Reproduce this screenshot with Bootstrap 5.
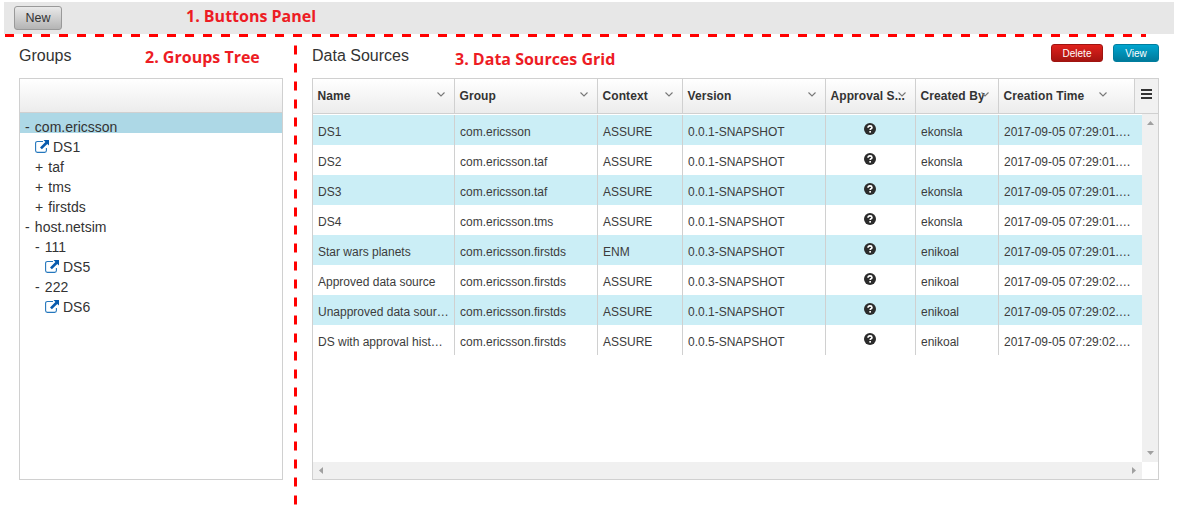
<!DOCTYPE html>
<html lang="en">
<head>
<meta charset="utf-8">
<title>Data Sources</title>
<link href="https://cdn.jsdelivr.net/npm/bootstrap@5.3.0/dist/css/bootstrap.min.css" rel="stylesheet">
<style>
body{font-family:"Liberation Sans",Arial,sans-serif;font-size:14px;color:#333;background:#fff;height:505px;overflow:hidden}
.action-bar{height:32px;margin:2px 12px 0 4px;padding:4px 10px;background:#e7e7e7}
.btn-new{width:48px;height:24px;padding:0;font-size:12.5px;line-height:21px;color:#333;border:1px solid #999;border-radius:3px;background:linear-gradient(#e9e9e9,#b4b4b4)}
.main-area{margin:10px 27px 0 19px;gap:29px}
.groups-col{width:264px}
.sources-col{width:847px}
.pane-head{height:34px}
.pane-title{font-size:16px;line-height:24px;font-weight:400;margin:0}
.pane-box{height:402px;border:1px solid #d0d0d0}
.grad-head{background:linear-gradient(#fff,#ececec);border-bottom:1px solid #d0d0d0}
.tree-head{height:34px}
.tree-item{height:20px;line-height:28px;padding-left:5px;white-space:pre;word-spacing:1.3px}
.tree-item.selected{background:#add8e6}
.lvl1{padding-left:15px}.lvl2{padding-left:25px}
.tree-item svg{width:14px;height:13px;margin-right:4px;vertical-align:-1px}
.btn-mini{height:18px;padding:0;font-size:10px;line-height:17px;color:#fff;border-radius:3px}
.btn-mini:hover{color:#fff}
.btn-del{width:52px;background:linear-gradient(#e0211c,#a51410);border:1px solid #a01410}
.btn-view{width:46px;background:linear-gradient(#00a5cf,#007a9b);border:1px solid #007d9e}
.grid-head{height:35px}
.grid-cell{flex:none;border-right:1px solid #d0d0d0;padding:0 5px;overflow:hidden;white-space:nowrap}
.grid-head .grid-cell{font-size:12px;font-weight:700;line-height:34px;padding-left:4.5px;letter-spacing:.08px;position:relative}
.grid-head .grid-cell svg{position:absolute;right:9px;top:12.5px}
.grid-head .c7 svg{right:27px}
.c1{width:142px}.c2{width:143px}.c3{width:85px}.c4{width:143px}.c5{width:90px}.c6{width:83px}.c7{width:136px}
.grid-row .c7{width:143px;border-right:0}
.grid-row{height:30px;line-height:34px;font-size:12px;color:#3c3c3c}
.grid-row:nth-child(odd){background:#cbeef6}
.grid-row .c5 svg{display:block;margin:8px auto 0 33px;width:12px;height:12px}
.menu-cell{width:24px;background:#f1f1f1}
.bar-v{width:16px;background:#f0f0f0;padding:7px 0 7px}
.bar-h{height:17px;margin-right:16px;background:#f0f0f0;padding:0 6px}
.mark-h,.mark-v{position:absolute;z-index:2}
.mark-h{left:5px;top:34px;width:1141px;height:3px;background:repeating-linear-gradient(90deg,#f00 0 9px,transparent 9px 18.03px)}
.mark-v{left:294px;top:45px;width:3px;height:460px;background:repeating-linear-gradient(#ff8080 0 1px,#f00 1px 9px,#ff8080 9px 10px,transparent 10px 18px)}
.note{position:absolute;z-index:3;font:700 16px/20px "Open Sans",sans-serif;color:#ed1c24;white-space:nowrap}
.n1{left:186px;top:6px}.n2{left:145px;top:47px}.n3{left:455px;top:49px}
</style>
</head>
<body class="position-relative">
<svg width="0" height="0" class="position-absolute">
  <symbol id="chev" viewBox="0 0 8 5"><path d="M.5 .5 4 4 7.5 .5" fill="none" stroke="#777" stroke-width="1.1"/></symbol>
  <symbol id="launch" viewBox="0 0 14 13"><path d="M8 1.500H2.500Q.6 1.500 .6 3.200V10.600Q.6 12.400 2.400 12.400H9.600Q11.400 12.400 11.400 10.600V8" fill="none" stroke="#2477bd" stroke-width="1.100"/><path d="M8.500 0H14V5.500L12.300 3.900 6.900 9.300 5 7.400 10.400 2Z" fill="#0a5cae"/></symbol>
  <symbol id="help" viewBox="0 0 12 12"><circle cx="6" cy="6" r="6" fill="#2b2b2b"/><path d="M4 4.700Q4.100 2.900 6 2.900T8 4.500Q8 5.300 7 5.800 6.200 6.200 6.200 7.100" fill="none" stroke="#fff" stroke-width="1.600"/><rect x="5.300" y="8" width="1.700" height="1.600" fill="#fff"/></symbol>
</svg>

<header class="action-bar d-flex"><button class="btn btn-new">New</button></header>

<main class="main-area d-flex">
  <section class="groups-col">
    <div class="pane-head"><h1 class="pane-title">Groups</h1></div>
    <div class="pane-box">
      <div class="tree-head grad-head"></div>
      <div class="tree-item selected">- com.ericsson</div>
      <div class="tree-item lvl1"><svg><use href="#launch"/></svg>DS1</div>
      <div class="tree-item lvl1">+ taf</div>
      <div class="tree-item lvl1">+ tms</div>
      <div class="tree-item lvl1">+ firstds</div>
      <div class="tree-item">- host.netsim</div>
      <div class="tree-item lvl1">- 111</div>
      <div class="tree-item lvl2"><svg><use href="#launch"/></svg>DS5</div>
      <div class="tree-item lvl1">- 222</div>
      <div class="tree-item lvl2"><svg><use href="#launch"/></svg>DS6</div>
    </div>
  </section>
  <section class="sources-col">
    <div class="pane-head d-flex justify-content-between align-items-start">
      <h2 class="pane-title">Data Sources</h2>
      <div class="d-flex" style="gap:10px"><button class="btn btn-mini btn-del">Delete</button><button class="btn btn-mini btn-view">View</button></div>
    </div>
    <div class="pane-box d-flex flex-column">
      <div class="grid-head grad-head d-flex" id="head"></div>
      <div class="d-flex flex-grow-1">
        <div class="flex-grow-1" style="padding-top:1px"><div id="rows"></div></div>
        <div class="bar-v d-flex flex-column justify-content-between align-items-center">
          <svg width="7" height="4"><path d="M0 4 3.500 0 7 4Z" fill="#a0a0a0"/></svg>
          <svg width="7" height="4"><path d="M0 0H7L3.500 4Z" fill="#a0a0a0"/></svg>
        </div>
      </div>
      <div class="bar-h d-flex justify-content-between align-items-center">
        <svg width="4" height="7"><path d="M4 0V7L0 3.500Z" fill="#a0a0a0"/></svg>
        <svg width="4" height="7"><path d="M0 0V7L4 3.500Z" fill="#a0a0a0"/></svg>
      </div>
    </div>
  </section>
</main>

<div class="mark-h"></div><div class="mark-v"></div>
<div class="note n1">1. Buttons Panel</div>
<div class="note n2">2. Groups Tree</div>
<div class="note n3">3. Data Sources Grid</div>

<script>
const cols = ['Name','Group','Context','Version','Approval S...','Created By','Creation Time'];
document.getElementById('head').innerHTML = cols.map((c,i) =>
  `<div class="grid-cell c${i+1}">${c}<svg width="8" height="5"><use href="#chev"/></svg></div>`).join('') +
  '<div class="menu-cell d-flex justify-content-center"><svg width="11" height="10" style="margin-top:10px"><path d="M0 1H11M0 5H11M0 9H11" stroke="#333" stroke-width="2"/></svg></div>';
const data = [
  ['DS1','com.ericsson','ASSURE','0.0.1','ekonsla','01'],
  ['DS2','com.ericsson.taf','ASSURE','0.0.1','ekonsla','01'],
  ['DS3','com.ericsson.taf','ASSURE','0.0.1','ekonsla','01'],
  ['DS4','com.ericsson.tms','ASSURE','0.0.1','ekonsla','01'],
  ['Star wars planets','com.ericsson.firstds','ENM','0.0.3','enikoal','01'],
  ['Approved data source','com.ericsson.firstds','ASSURE','0.0.3','enikoal','02'],
  ['Unapproved data sour…','com.ericsson.firstds','ASSURE','0.0.1','enikoal','02'],
  ['DS with approval hist…','com.ericsson.firstds','ASSURE','0.0.5','enikoal','02']
];
document.getElementById('rows').innerHTML = data.map(([n,g,c,v,u,s]) =>
  '<div class="grid-row d-flex">' + [n,g,c,v+'-SNAPSHOT','<svg><use href="#help"/></svg>',u,'2017-09-05 07:29:'+s+'.…']
    .map((t,i) => `<div class="grid-cell c${i+1}">${t}</div>`).join('') + '</div>').join('');
</script>
<script src="https://cdn.jsdelivr.net/npm/bootstrap@5.3.0/dist/js/bootstrap.bundle.min.js"></script>
</body>
</html>
